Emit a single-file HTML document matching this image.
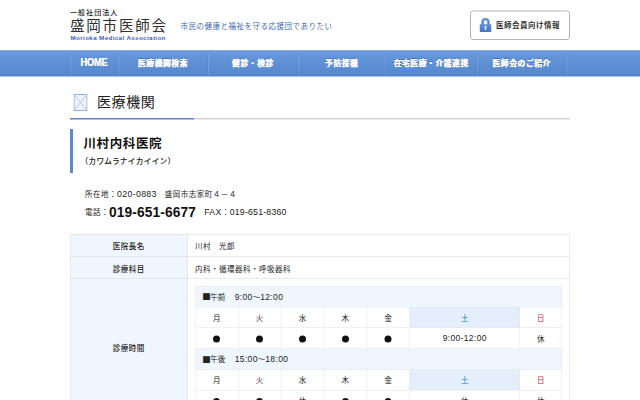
<!DOCTYPE html>
<html lang="ja">
<head>
<meta charset="utf-8">
<title>川村内科医院 | 医療機関 | 一般社団法人 盛岡市医師会</title>
<style>
html,body{margin:0;padding:0;background:#fff;}
html{width:640px;height:400px;overflow:hidden;}
body{width:640px;height:400px;overflow:hidden;position:relative;}
#page{position:absolute;left:0;top:0;width:1280px;height:800px;transform:scale(0.5);transform-origin:0 0;
  font-family:"Liberation Sans","Noto Sans CJK JP",sans-serif;font-size:15px;letter-spacing:1px;color:#222;overflow:hidden;}
#page *{box-sizing:border-box;}
.wrap{width:1000px;margin:0 auto;position:relative;}
/* header */
#header{height:100px;position:relative;}
.logo{position:absolute;left:0;top:0;}
.logo .l1{position:absolute;left:0;top:14px;font-size:14px;line-height:20px;letter-spacing:2.1px;font-weight:500;color:#222;white-space:nowrap;}
.logo .l2{position:absolute;left:0;top:33px;font-size:29px;line-height:36px;letter-spacing:3.6px;color:#303030;white-space:nowrap;}
.logo .l3{position:absolute;left:1px;top:67.5px;font-size:12.5px;line-height:16px;letter-spacing:0.72px;color:#3f5ccc;font-weight:bold;white-space:nowrap;}
.tagline{position:absolute;left:221px;top:41px;font-size:15px;line-height:22px;color:#3f68b4;white-space:nowrap;}
.member{position:absolute;left:800px;top:21px;width:200px;height:59px;border:2px solid #b4b4b4;border-radius:6px;background:#fff;}
.member svg{position:absolute;left:17px;top:12.5px;}
.member span{position:absolute;left:50px;top:15.5px;font-size:15px;line-height:22px;font-weight:bold;color:#333;white-space:nowrap;}
/* nav */
#nav{height:53px;background:linear-gradient(#6799db,#5687ce);border-top:1px solid #5a8dd8;border-bottom:1px solid #5080c8;box-shadow:inset 0 1px 0 rgba(255,255,255,.12);}
#nav ul{list-style:none;margin:0;padding:0;height:52px;display:flex;}
#nav li{height:52px;line-height:49px;text-align:center;color:#fff;font-weight:bold;font-size:15.5px;letter-spacing:1.2px;
  text-shadow:0 0 1px rgba(255,255,255,.9),0 -1px 1px rgba(40,70,130,.5);-webkit-text-stroke:0.5px #fff;white-space:nowrap;position:relative;}
#nav li:before{content:"";position:absolute;left:0;top:9px;bottom:4px;width:1px;background:rgba(255,255,255,.3);box-shadow:-1px 0 0 rgba(40,80,150,.18);}
#nav li.last:after{content:"";position:absolute;right:0;top:9px;bottom:4px;width:1px;background:rgba(255,255,255,.3);box-shadow:-1px 0 0 rgba(40,80,150,.18);}
#nav li.home span{display:inline-block;transform:scale(0.97,1.12);transform-origin:50% 55%;}
#nav li.home{font-size:19px;letter-spacing:-0.35px;line-height:50px;-webkit-text-stroke:0.2px #fff;}
/* heading */
.h1{position:relative;height:84px;margin-top:0;}
.h1 svg{position:absolute;left:7px;top:34px;}
.h1 h1{position:absolute;left:54px;top:31px;margin:0;font-size:28px;line-height:40px;font-weight:normal;letter-spacing:1.2px;color:#222;}
.h1 .line{position:absolute;left:0;top:82px;width:1000px;height:3px;background:#d4d4d4;}
.h1 .line i{display:block;width:248px;height:3px;background:linear-gradient(#5f7dc6,#6f90d4);}
/* name */
.name{position:relative;margin-top:20px;height:88px;border-left:6.5px solid #5b89d0;}
.name h2{position:absolute;left:21px;top:9.5px;margin:0;font-size:25px;line-height:36px;font-weight:bold;letter-spacing:1.2px;color:#111;}
.name p{position:absolute;left:15px;top:54px;margin:0;font-size:15.5px;line-height:22px;letter-spacing:0.4px;color:#222;font-weight:500;}
.addr{position:absolute;left:30px;font-size:15px;line-height:22px;white-space:nowrap;color:#222;}
.addr b{font-size:27.5px;letter-spacing:0.25px;color:#111;position:relative;top:3.5px;}
.n{font-size:17.5px;letter-spacing:0.7px;}
/* table */
table{border-collapse:collapse;border-spacing:0;}
.info{position:absolute;left:0;top:0;width:1000px;}
.info>tbody>tr>th{width:234px;background:#f0f6fd;border:1px solid #d6d6d6;font-weight:500;font-size:15px;text-align:center;color:#222;padding:0;}
.info>tbody>tr>td{border:1px solid #d6d6d6;padding:0 15px 0 15px;font-size:15px;color:#222;}
.info tr.r{height:44.5px;}
.info tr.r>th,.info tr.r>td{padding-top:2px;}
.tt{width:734px;margin-top:14px;}
.tt th.cap{background:#f0f6fd;text-align:left;font-weight:normal;height:41.6px;padding:0 0 0 15px;font-size:15px;letter-spacing:0;border:1px solid #e2e2e2;}
.tt td{height:41.6px;text-align:center;border:1px solid #e2e2e2;font-size:15px;letter-spacing:0;padding:0;width:86px;}
.tt .n{font-size:17px;letter-spacing:0.7px;}
.tt .cap .n1{margin-left:4px;}
.tt td.sat{width:221px;}
.tt td.su{width:84px;}
.tt tr.d td.sat{background:#e5effc;color:#2470b6;}
.tt tr.d td.sun{color:#c8263e;}
.sq{font-family:"Noto Sans CJK JP",sans-serif;font-size:17px;line-height:14px;margin:0 -1px 0 -1.5px;letter-spacing:0;position:relative;top:1px;}
.dot{display:inline-block;width:14px;height:14px;border-radius:50%;background:#111;vertical-align:middle;}
</style>
</head>
<body>
<div id="page">
  <div id="header"><div class="wrap">
    <div class="logo">
      <div class="l1">一般社団法人</div>
      <div class="l2">盛岡市医師会</div>
      <div class="l3">Morioka Medical Association</div>
    </div>
    <div class="tagline">市民の健康と福祉を守る応援団でありたい</div>
    <div class="member">
      <svg width="24" height="28" viewBox="0 0 24 28"><defs><linearGradient id="lk" x1="0" y1="0" x2="0" y2="1"><stop offset="0" stop-color="#5d91da"/><stop offset="1" stop-color="#4677c2"/></linearGradient></defs><path d="M6.15 14V8.1a5.85 5.85 0 0 1 11.7 0V14" fill="none" stroke="url(#lk)" stroke-width="4.5"/><rect x="0" y="12.4" width="24" height="15.6" rx="1.6" fill="url(#lk)"/><circle cx="12" cy="17.6" r="2.3" fill="#dcedff"/><path d="M10.9 18h2.2l0.5 6.2h-3.2z" fill="#dcedff"/></svg>
      <span>医師会員向け情報</span>
    </div>
  </div></div>
  <div id="nav"><div class="wrap"><ul>
    <li class="home" style="width:96px"><span>HOME</span></li>
    <li style="width:180px">医療機関検索</li>
    <li style="width:180px">健診・検診</li>
    <li style="width:175px">予防接種</li>
    <li style="width:183px">在宅医療・介護連携</li>
    <li class="last" style="width:179px">医師会のご紹介</li>
  </ul></div></div>
  <div class="wrap">
    <div class="h1" style="margin-top:1px">
      <svg width="28" height="34" viewBox="0 0 28 34"><rect x="1" y="1" width="26" height="32" fill="#eef4fd" stroke="#94a9dc" stroke-width="1.9"/><path d="M1 1L27 33M27 1L1 33" stroke="#a3b5e0" stroke-width="1.5" fill="none"/></svg>
      <h1>医療機関</h1>
      <div class="line"><i></i></div>
    </div>
    <div class="name">
      <h2>川村内科医院</h2>
      <p>（カワムラナイカイイン）</p>
    </div>
    <div style="position:relative;height:122px;">
      <div class="addr" style="top:30px;">所在地：<span class="n">020-0883</span>　盛岡市志家町４－４</div>
      <div class="addr" style="top:59px;line-height:30px;">電話：<b>019-651-6677</b>　<span class="n">FAX</span>：<span class="n" style="letter-spacing:0.4px">019-651-8360</span></div>
    </div>
    <div style="position:relative;height:340px;">
    <table class="info"><tbody>
      <tr class="r"><th>医院長名</th><td>川村　光郎</td></tr>
      <tr class="r"><th>診療科目</th><td>内科・循環器科・呼吸器科</td></tr>
      <tr><th>診療時間</th><td style="padding-bottom:8px;">
        <table class="tt"><tbody>
          <tr><th class="cap" colspan="7"><span class="sq">■</span>午前　<span class="n n1">9:00</span>〜<span class="n">12:00</span></th></tr>
          <tr class="d"><td>月</td><td>火</td><td>水</td><td>木</td><td>金</td><td class="sat">土</td><td class="sun su">日</td></tr>
          <tr><td><i class="dot"></i></td><td><i class="dot"></i></td><td><i class="dot"></i></td><td><i class="dot"></i></td><td><i class="dot"></i></td><td class="sat"><span class="n">9:00-12:00</span></td><td class="su">休</td></tr>
          <tr><th class="cap" colspan="7"><span class="sq">■</span>午後　<span class="n n1">15:00</span>〜<span class="n">18:00</span></th></tr>
          <tr class="d"><td>月</td><td>火</td><td>水</td><td>木</td><td>金</td><td class="sat">土</td><td class="sun su">日</td></tr>
          <tr><td><i class="dot"></i></td><td><i class="dot"></i></td><td>休</td><td><i class="dot"></i></td><td><i class="dot"></i></td><td class="sat">休</td><td class="su">休</td></tr>
        </tbody></table>
      </td></tr>
    </tbody></table>
    </div>
  </div>
</div>
</body>
</html>
